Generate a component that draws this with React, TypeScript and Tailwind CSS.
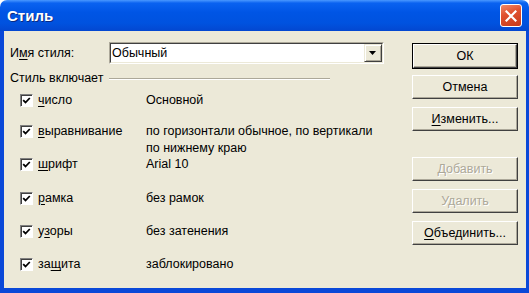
import React from 'react';

const font = "font-['Liberation_Sans',Arial,sans-serif]";

function U({ children }: { children: React.ReactNode }) {
  return <span className="underline underline-offset-[2px] decoration-1">{children}</span>;
}

function Button({
  children,
  primary = false,
  disabled = false,
}: {
  children: React.ReactNode;
  primary?: boolean;
  disabled?: boolean;
}) {
  const face = (
    <div
      className={`flex-1 flex items-center justify-center border border-t-white border-l-white border-b-[#404040] border-r-[#404040] shadow-[inset_-1px_-1px_0_#aca899] ${
        disabled ? 'text-[#aca899] [text-shadow:1px_1px_0_#ffffff]' : 'text-black'
      }`}
    >
      {children}
    </div>
  );
  if (primary) {
    return <div className="h-[26px] flex border border-black">{face}</div>;
  }
  return <div className="h-[24px] flex">{face}</div>;
}

function Check() {
  return (
    <div className="w-[13px] h-[13px] bg-white border border-t-[#808080] border-l-[#808080] border-b-white border-r-white shadow-[inset_1px_1px_0_#404040] flex items-center justify-center">
      <svg width="9" height="9" viewBox="0 0 9 9">
        <path d="M1.2 4.2 L3.5 6.5 L7.8 2" stroke="#000" strokeWidth="1.8" fill="none" />
      </svg>
    </div>
  );
}

const rows: { label: React.ReactNode; value: React.ReactNode; h: string }[] = [
  { label: <><U>ч</U>исло</>, value: 'Основной', h: 'h-[31px]' },
  {
    label: <><U>в</U>ыравнивание</>,
    value: <>по горизонтали обычное, по вертикали<br />по нижнему краю</>,
    h: 'h-[33px]',
  },
  { label: <><U>ш</U>рифт</>, value: 'Arial 10', h: 'h-[34px]' },
  { label: <><U>р</U>амка</>, value: 'без рамок', h: 'h-[33px]' },
  { label: <>у<U>з</U>оры</>, value: 'без затенения', h: 'h-[33px]' },
  { label: <>за<U>щ</U>ита</>, value: 'заблокировано', h: 'h-[17px]' },
];

export default function App() {
  return (
    <div className={`w-[529px] h-[293px] flex flex-col text-[12.5px] leading-[17px] ${font}`}>
      {/* заголовок */}
      <div className="h-[31px] shrink-0 rounded-t-[7px] bg-[linear-gradient(180deg,#4a98ff_0%,#0a62f0_10%,#0055e5_40%,#0052df_75%,#0347d0_100%)] flex items-center justify-between pl-[7px] pr-[7px]">
        <span className="text-white font-bold text-[15px] [text-shadow:1px_1px_0_#0a2a80]">Стиль</span>
        <div className="w-[22px] h-[23px] rounded-[3px] border border-white bg-[linear-gradient(160deg,#f08a6a_0%,#e0512f_40%,#c63a1a_100%)] flex items-center justify-center">
          <svg width="12" height="12" viewBox="0 0 12 12">
            <path d="M1.5 1.5 L10.5 10.5 M10.5 1.5 L1.5 10.5" stroke="#fff" strokeWidth="2.2" strokeLinecap="square" />
          </svg>
        </div>
      </div>

      {/* тело */}
      <div className="flex-1 flex bg-[#ece9d8] border-l-[4px] border-r-[3px] border-b-[5px] border-[#0a48d8]">
        <div className="flex-1 pt-[11px]">
          <div className="flex items-center h-[22px]">
            <span className="w-[105px] pl-[6px]">
              И<U>м</U>я стиля:
            </span>
            <div className="w-[275px] h-[22px] flex border border-t-[#aca899] border-l-[#aca899] border-b-white border-r-white">
              <div className="flex-1 flex bg-white border border-t-[#404040] border-l-[#404040] border-b-[#ece9d8] border-r-[#ece9d8]">
                <span className="flex-1 pl-[1px] leading-[18px]">Обычный</span>
                <div className="w-[18px] flex items-center justify-center bg-[#ece9d8] border border-t-[#ece9d8] border-l-[#ece9d8] border-b-[#404040] border-r-[#404040] shadow-[inset_1px_1px_0_#ffffff,inset_-1px_-1px_0_#aca899]">
                  <svg width="8" height="5" viewBox="0 0 8 5">
                    <path d="M0 0 H7 L3.5 4 Z" fill="#000" />
                  </svg>
                </div>
              </div>
            </div>
          </div>

          <div className="flex items-center mt-[6px] pl-[6px] w-[326px] h-[17px]">
            <span>Стиль включает</span>
            <div className="ml-[6px] flex-1 border-t border-t-[#aca899] border-b border-b-white" />
          </div>

          <div className="mt-[5px] pl-[16px]">
            {rows.map((r, i) => (
              <div key={i} className={`flex items-start ${r.h}`}>
                <div className="w-[18px] h-[17px] flex items-center">
                  <Check />
                </div>
                <span className="w-[108px]">{r.label}</span>
                <span>{r.value}</span>
              </div>
            ))}
          </div>
        </div>

        <div className="w-[106px] mr-[8px] pt-[12px] flex flex-col">
          <Button primary>ОК</Button>
          <div className="mt-[6px] flex flex-col gap-[8px]">
            <Button>Отмена</Button>
            <Button>
              <span><U>И</U>зменить...</span>
            </Button>
          </div>
          <div className="mt-[26px] flex flex-col gap-[8px]">
            <Button disabled>Добавить</Button>
            <Button disabled>Удалить</Button>
            <Button>
              <span><U>О</U>бъединить...</span>
            </Button>
          </div>
        </div>
      </div>
    </div>
  );
}
